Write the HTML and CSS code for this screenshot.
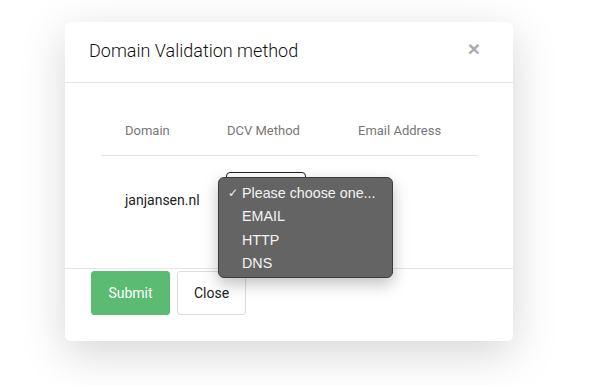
FILE: index.html
```html
<!DOCTYPE html>
<html>
<head>
<meta charset="utf-8">
<link rel="stylesheet" href="styles.css">
</head>
<body>
<div class="modal">
  <div class="modal-header">
    <h4 class="modal-title">Domain Validation method</h4>
    <span class="close">&times;</span>
  </div>
  <div class="modal-body">
    <div class="table">
      <div class="row head">
        <div class="cell">Domain</div>
        <div class="cell">DCV Method</div>
        <div class="cell">Email Address</div>
      </div>
      <div class="row">
        <div class="cell domain">janjansen.nl</div>
        <div class="cell select-cell">
          <div class="select"></div>
          <div class="popup">
            <div class="opt"><span class="check">✓</span>Please choose one...</div>
            <div class="opt">EMAIL</div>
            <div class="opt">HTTP</div>
            <div class="opt">DNS</div>
          </div>
        </div>
        <div class="cell"></div>
      </div>
    </div>
  </div>
  <div class="modal-footer">
    <button class="btn btn-submit">Submit</button>
    <button class="btn btn-close">Close</button>
  </div>
</div>
</body>
</html>
```
FILE: styles.css
```css
html, body {
  margin: 0;
  padding: 0;
  background: #fff;
  width: 612px;
  height: 385px;
  overflow: hidden;
  font-family: Roboto, "Liberation Sans", sans-serif;
}
.modal {
  margin: 22px 0 0 65px;
  width: 448px;
  height: 319px;
  background: #fff;
  border-radius: 6px;
  box-shadow: 0 12px 45px rgba(0,0,0,0.17);
  display: flex;
  flex-direction: column;
}
.modal-header {
  height: 60px;
  border-bottom: 1px solid #e5e5e5;
  display: flex;
  align-items: center;
  justify-content: space-between;
  padding: 0 33px 0 24px;
  box-sizing: content-box;
}
.modal-title {
  margin: 0;
  font-size: 18px;
  font-weight: 300;
  color: #111;
  padding-bottom: 3px;
}
.close {
  font-size: 21px;
  font-weight: 700;
  color: #aaa;
  line-height: 1;
  margin-top: -7px;
  font-family: "Liberation Sans", sans-serif;
}
.modal-body {
  height: 185px;
  padding: 0 35px 0 36px;
}
.table {
  padding-top: 23px;
}
.row {
  display: grid;
  grid-template-columns: 102px 131px 1fr;
}
.row.head {
  height: 49px;
  border-bottom: 1px solid #e5e5e5;
  align-items: center;
}
.row.head .cell {
  font-size: 13px;
  color: #777;
  padding-left: 24px;
}
.cell {
  padding-left: 24px;
}
.domain {
  font-size: 14px;
  color: #222;
  padding-top: 34px;
  line-height: 20px;
}
.select-cell {
  position: relative;
  padding-top: 16px;
  padding-left: 23px;
}
.select {
  width: 78px;
  height: 32px;
  border: 1px solid #222;
  border-radius: 4px;
}
.popup {
  position: absolute;
  left: 15px;
  top: 21px;
  width: 173px;
  height: 95px;
  background: #646464;
  border: 1px solid #3c3c3c;
  border-radius: 6px;
  box-shadow: 0 6px 16px rgba(0,0,0,0.25);
  padding-top: 4px;
  box-sizing: content-box;
}
.opt {
  height: 23.4px;
  line-height: 23.4px;
  font-family: "Liberation Sans", Arial, sans-serif;
  font-size: 14.3px;
  color: #f4f4f4;
  padding-left: 23px;
  position: relative;
}
.check {
  position: absolute;
  left: 9px;
  font-size: 12px;
  font-family: "DejaVu Sans", sans-serif;
}
.modal-footer {
  border-top: 1px solid #e5e5e5;
  padding: 2px 26px 0 26px;
  display: flex;
  gap: 7px;
}
.btn {
  height: 44px;
  font-family: Roboto, "Liberation Sans", sans-serif;
  font-size: 14px;
  border-radius: 3px;
  padding: 0;
  cursor: pointer;
}
.btn-submit {
  width: 79px;
  background: #5bbb73;
  border: 1px solid #5bbb73;
  color: #fff;
}
.btn-close {
  width: 69px;
  background: #fff;
  border: 1px solid #ddd;
  color: #222;
}
```
